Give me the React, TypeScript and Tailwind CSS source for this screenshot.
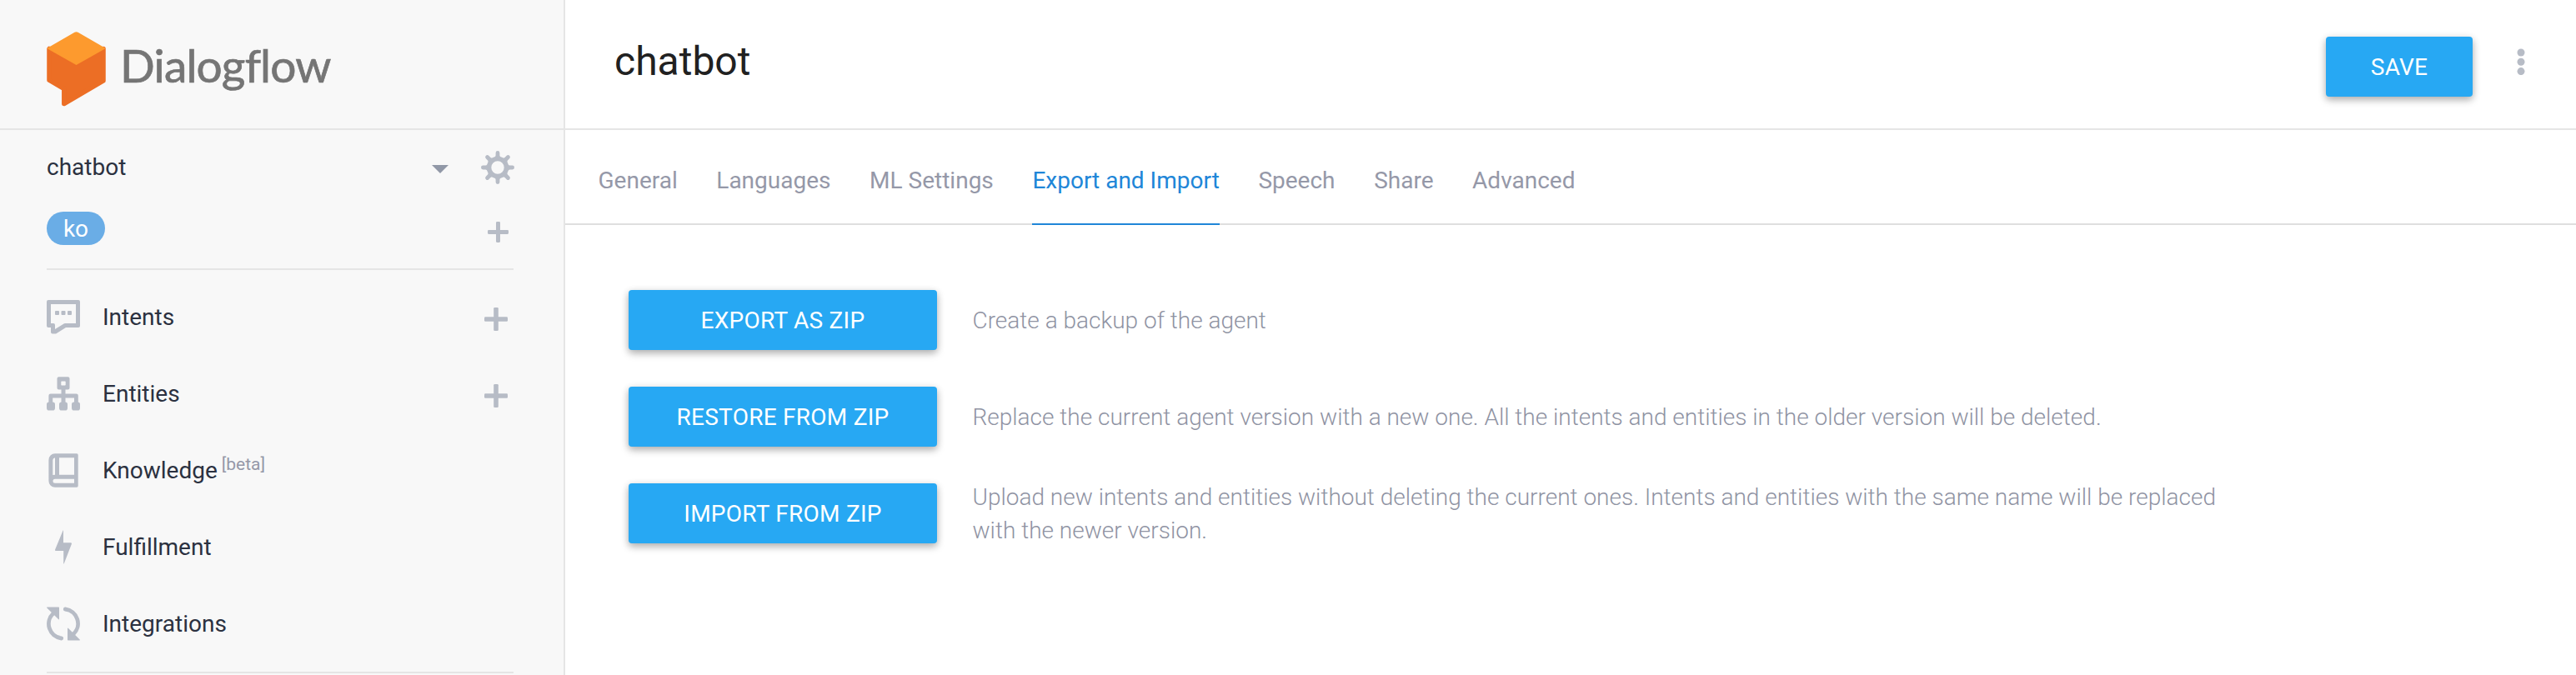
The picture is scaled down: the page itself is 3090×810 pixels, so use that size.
import React from "react";

type IconProps = { className?: string };

const Logo = () => (
  <svg width="71" height="90" viewBox="0 0 71 90" className="shrink-0">
    <path
      d="M3 20.5V58.2L20.8 68.5V86.6L68 59V20.5L35.500 38Z"
      fill="#ec6e25"
      stroke="#ec6e25"
      strokeWidth="5.500"
      strokeLinejoin="round"
    />
    <path
      d="M33.500 .8Q35.500 -.4 37.500 .8L69.500 19.200Q70.500 20 70 20.500L35.500 40L1 20.500Q.5 20 1.500 19.200Z"
      fill="#fd9a2e"
    />
  </svg>
);

const Gear = () => (
  <svg width="40" height="40" viewBox="0 0 40 40" fill="#b7bcc6" className="mt-px shrink-0">
    <path
      fillRule="evenodd"
      d="M20 6.800a13.200 13.200 0 1 0 0 26.400a13.200 13.200 0 1 0 0-26.400ZM20 12.300a7.700 7.700 0 1 1 0 15.400a7.700 7.700 0 1 1 0-15.400Z"
    />
    {[0, 45, 90, 135, 180, 225, 270, 315].map((a) => (
      <path
        key={a}
        transform={`rotate(${a} 20 20)`}
        d="M17.600 2.400a2.400 2.400 0 0 1 4.800 0V5.500Q22.600 7.500 24.600 8.200V10H15.400V8.200Q17.400 7.500 17.600 5.500Z"
      />
    ))}
  </svg>
);

const Plus = ({ size }: { size: number }) => (
  <svg width={size} height={size} viewBox="0 0 28 28" fill="#b7bcc6" className="shrink-0">
    <rect x="0" y="11.200" width="28" height="5.600" rx="1.300" />
    <rect x="11.200" y="0" width="5.600" height="28" rx="1.300" />
  </svg>
);

const IntentsIcon = ({ className }: IconProps) => (
  <svg width="40" height="41" viewBox="0 0 40 41" fill="#b7bcc6" className={className}>
    <path
      fillRule="evenodd"
      d="M2 0H38a2 2 0 0 1 2 2V31a2 2 0 0 1-2 2H23L11.500 40.200Q11 40.500 10.500 40.500H7a2 2 0 0 1-2-2V33H2a2 2 0 0 1-2-2V2a2 2 0 0 1 2-2ZM5 5V28H8a2 2 0 0 1 2 2V35L21 28.300Q21.600 28 22.300 28H35V5Z"
    />
    <rect x="10" y="13" width="5" height="5" rx="1" />
    <rect x="17.500" y="13" width="5" height="5" rx="1" />
    <rect x="25" y="13" width="5" height="5" rx="1" />
  </svg>
);

const EntitiesIcon = ({ className }: IconProps) => (
  <svg width="40" height="41" viewBox="0 0 40 41" fill="#b7bcc6" className={className}>
    <path
      fillRule="evenodd"
      d="M14.500 .3H25.500a2 2 0 0 1 2 2V13.500a2 2 0 0 1-2 2H22.500V20.500H35.500a2.300 2.300 0 0 1 2.300 2.300V32H33V25.500H22.500V32H17.500V25.500H7.200V32H2.400V22.800a2.300 2.300 0 0 1 2.300-2.300H17.500V15.500H14.500a2 2 0 0 1-2-2V2.300a2 2 0 0 1 2-2ZM18 5.500a.7.7 0 0 0-.7.7V9.800a.7.7 0 0 0 .7.7H22a.7.7 0 0 0 .7-.7V6.200a.7.7 0 0 0-.7-.7Z"
    />
    <rect x="0" y="30.500" width="10" height="10" rx="2.800" />
    <rect x="15" y="30.500" width="10" height="10" rx="2.800" />
    <rect x="30" y="30.500" width="10" height="10" rx="2.800" />
  </svg>
);

const BookIcon = ({ className }: IconProps) => (
  <svg width="40" height="41" viewBox="0 0 40 41" fill="#b7bcc6" className={className}>
    <path
      fillRule="evenodd"
      d="M10 .3H36a1.700 1.700 0 0 1 1.700 1.700V39a1.700 1.700 0 0 1-1.700 1.700H10A7.600 7.600 0 0 1 2.400 33V8A7.600 7.600 0 0 1 10 .3ZM10 5.200Q7.300 5.600 7.300 8V26Q8.400 25.700 10 25.700ZM15 5.200V25.700H33V5.200ZM10 30.700a2.500 2.500 0 0 0 0 5H33V30.700Z"
    />
  </svg>
);

const BoltIcon = ({ className }: IconProps) => (
  <svg width="40" height="41" viewBox="0 0 40 41" fill="#b7bcc6" className={className}>
    <path d="M19.400 .9Q20 -.2 20 1V15.300H28.800Q30.300 15.300 29.900 16.700L20.900 40Q20.200 41.200 20.200 40V25H11Q9.700 25 10.100 23.600Z" />
  </svg>
);

const SyncIcon = ({ className }: IconProps) => (
  <svg width="40" height="41" viewBox="0 0 40 40" className={className}>
    {[0, 180].map((a) => (
      <g key={a} transform={`rotate(${a} 20 20)`}>
        <path d="M8 7.500A17.400 17.400 0 0 0 17.700 37.500" fill="none" stroke="#b7bcc6" strokeWidth="4.800" strokeLinecap="round" />
        <path d="M.6 0H14.300Q15 0 15 .7V14.400Q14.800 15.400 14 14.600L.3 1Q-.2 .2 .6 0Z" fill="#b7bcc6" />
      </g>
    ))}
  </svg>
);

const nav = [
  { label: "Intents", Icon: IntentsIcon, add: true },
  { label: "Entities", Icon: EntitiesIcon, add: true },
  { label: "Knowledge", Icon: BookIcon, note: "[beta]" },
  { label: "Fulfillment", Icon: BoltIcon },
  { label: "Integrations", Icon: SyncIcon },
];

const tabs = ["General", "Languages", "ML Settings", "Export and Import", "Speech", "Share", "Advanced"];

const actions = [
  { label: "EXPORT AS ZIP", text: "Create a backup of the agent" },
  {
    label: "RESTORE FROM ZIP",
    text: "Replace the current agent version with a new one. All the intents and entities in the older version will be deleted.",
  },
  {
    label: "IMPORT FROM ZIP",
    text: "Upload new intents and entities without deleting the current ones. Intents and entities with the same name will be replaced with the newer version.",
  },
];

const Button = ({ label, className }: { label: string; className: string }) => (
  <button
    className={`h-[72px] shrink-0 rounded-[4px] bg-[#27a8f3] pt-0.5 text-[28px] tracking-[0.25px] text-white shadow-[0_4px_10px_rgba(0,0,0,0.26),0_2px_10px_rgba(0,0,0,0.1)] ${className}`}
  >
    {label}
  </button>
);

const Sidebar = () => (
  <aside className="flex w-[678px] shrink-0 flex-col border-r-2 border-[#e5e5e5] bg-[#f8f8f8] text-[28px] text-[#2b3140]">
    <div className="flex h-[156px] shrink-0 items-start border-b-2 border-[#e5e5e5] pt-[38px] pl-14">
      <Logo />
      <span className="ml-[17px] pt-1 font-[Lato] text-[55px] leading-[72px] tracking-[-0.8px] text-[#757575] [-webkit-text-stroke:0.7px_#757575] [font-variant-ligatures:none]">
        Dialogflow
      </span>
    </div>
    <div className="mx-14 flex h-[168px] w-[560px] shrink-0 flex-col border-b-2 border-[#e5e5e5] pt-6">
      <div className="-mr-px flex h-10 items-center">
        <span className="flex-1 pt-0.5">chatbot</span>
        <svg width="20" height="10" viewBox="0 0 20 10" className="mt-1.5 mr-[39px]">
          <path d="M0 0H20L10 10Z" fill="#9198a7" />
        </svg>
        <Gear />
      </div>
      <div className="mt-[34px] flex h-10 justify-between pr-1.5">
        <span className="flex w-[70px] items-center justify-center rounded-full bg-[#6aade6] pt-0.5 text-white">ko</span>
        <div className="pt-3">
          <Plus size={25} />
        </div>
      </div>
    </div>
    <nav className="mx-14 mt-2.5 flex h-[474px] w-[560px] shrink-0 flex-col border-b-2 border-[#e5e5e5]">
      {nav.map(({ label, Icon, add, note }) => (
        <a key={label} className="flex h-[92px] shrink-0 items-center pr-[7px]">
          <Icon className="shrink-0" />
          <span className="ml-[27px] pt-0.5">{label}</span>
          {note && <span className="mb-3 ml-[5px] text-[21px] text-[#9598a8]">{note}</span>}
          {add && (
            <span className="mt-[5px] ml-auto">
              <Plus size={28} />
            </span>
          )}
        </a>
      ))}
    </nav>
  </aside>
);

export default function App() {
  return (
    <div className="flex h-[810px] w-[3090px] overflow-hidden bg-white font-[Roboto,sans-serif]">
      <Sidebar />
      <main className="flex min-w-0 flex-1 flex-col">
        <header className="flex h-[156px] shrink-0 items-start border-b-2 border-[#e5e5e5] pr-[61px] pl-[59px]">
          <h1 className="flex-1 pt-[46px] text-[48px] leading-[56px] text-[#212121]">chatbot</h1>
          <Button label="SAVE" className="mt-11 w-[176px]" />
          <svg width="10" height="32" viewBox="0 0 10 32" fill="#b7bcc6" className="mt-[58px] ml-[53px]">
            <circle cx="5" cy="5" r="4.500" />
            <circle cx="5" cy="16.300" r="4.500" />
            <circle cx="5" cy="27.600" r="4.500" />
          </svg>
        </header>
        <div className="flex h-[114px] shrink-0 gap-[46.6px] border-b-2 border-[#dfdfdf] pl-[39.5px] text-[28px] text-[#9598a8]">
          {tabs.map((t) => (
            <a
              key={t}
              className={
                t === "Export and Import"
                  ? "h-[114px] border-b-2 border-[#2086d8] pt-[42px] leading-[38px] text-[#2086d8]"
                  : "h-[112px] pt-[42px] leading-[38px]"
              }
            >
              {t}
            </a>
          ))}
        </div>
        <section className="flex flex-col gap-11 pt-[78px] pl-[76px]">
          {actions.map(({ label, text }) => (
            <div key={label} className="flex h-[72px] items-center gap-[42.5px]">
              <Button label={label} className="w-[370px]" />
              <p className="w-[1520px] pt-0.5 text-[28px] leading-10 font-light text-[#8f93a3]">{text}</p>
            </div>
          ))}
        </section>
      </main>
    </div>
  );
}
